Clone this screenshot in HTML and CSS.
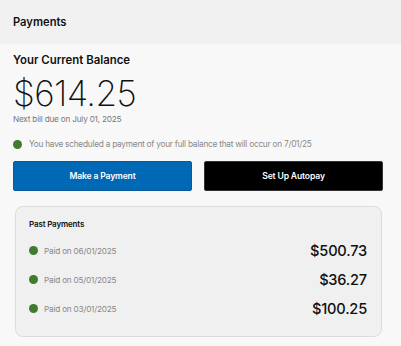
FILE: index.html
```
<!DOCTYPE html>
<html lang="en">
<head>
    <meta charset="UTF-8">
    <meta name="viewport" content="width=device-width, initial-scale=1.0">
    <title>Payments</title>
    <link rel="stylesheet" href="styles.css">
</head>
<body>
    <header class="top-bar">Payments</header>

    <main class="content">
        <h2 class="balance-title">Your Current Balance</h2>
        <div class="balance-amount">$614.25</div>
        <p class="next-bill">Next bill due on July 01, 2025</p>

        <div class="notice">
            <span class="dot"></span>
            <span>You have scheduled a payment of your full balance that will occur on 7/01/25</span>
        </div>

        <div class="button-row">
            <button class="btn btn-blue">Make a Payment</button>
            <button class="btn btn-black">Set Up Autopay</button>
        </div>

        <!-- Past payments card -->
        <section class="past-card">
            <h3 class="past-title">Past Payments</h3>
            <div class="past-row">
                <span class="dot"></span>
                <span class="past-date">Paid on 06/01/2025</span>
                <span class="past-amount">$500.73</span>
            </div>
            <div class="past-row">
                <span class="dot"></span>
                <span class="past-date">Paid on 05/01/2025</span>
                <span class="past-amount">$36.27</span>
            </div>
            <div class="past-row">
                <span class="dot"></span>
                <span class="past-date">Paid on 03/01/2025</span>
                <span class="past-amount">$100.25</span>
            </div>
        </section>
    </main>
</body>
</html>
```

FILE: styles.css
```
body {
    margin: 0;
    background: #f8f8f8;
    font-family: Inter, 'Noto Sans', sans-serif;
    color: #111;
}
.top-bar {
    height: 44px;
    background: #f1f1f1;
    display: flex;
    align-items: center;
    padding: 0 13px;
    font-size: 11.2px;
    font-weight: 600;
}
.content {
    padding: 0 18px 0 13px;
}
.balance-title {
    margin: 8px 0 0;
    font-size: 11.4px;
    font-weight: 600;
    line-height: 16px;
}
.balance-amount {
    margin-top: 5px;
    font-size: 35px;
    font-weight: 200;
    line-height: 40px;
    letter-spacing: -0.6px;
}
.next-bill {
    margin: 1px 0 0;
    font-size: 8.2px;
    letter-spacing: -0.2px;
    color: #777;
    line-height: 10px;
}
.notice {
    display: flex;
    align-items: center;
    gap: 7px;
    margin-top: 14px;
    font-size: 8.3px;
    letter-spacing: -0.25px;
    color: #888;
    line-height: 12px;
}
.dot {
    width: 9px;
    height: 9px;
    border-radius: 50%;
    background: #3f7d2c;
    flex-shrink: 0;
}
.button-row {
    display: flex;
    gap: 12px;
    margin-top: 11px;
}
.btn {
    flex: 1;
    height: 30px;
    border-radius: 2px;
    font-family: inherit;
    font-size: 8.6px;
    letter-spacing: -0.15px;
    font-weight: 600;
    color: #fff;
    cursor: pointer;
}
.btn-blue {
    background: #0068b5;
    border: 1px solid #0a5a9a;
}
.btn-black {
    background: #000;
    border: 1px solid #333;
}
.past-card {
    margin: 15px 1px 0 2px;
    background: #f0f0f0;
    border: 1px solid #dcdcdc;
    border-radius: 8px;
    padding: 12px 14px 12px 13px;
}
.past-title {
    margin: 0 0 7px;
    font-size: 8px;
    letter-spacing: -0.15px;
    font-weight: 600;
    line-height: 10px;
}
.past-row {
    display: flex;
    align-items: center;
    gap: 6px;
    height: 29.2px;
}
.past-date {
    font-size: 8.2px;
    letter-spacing: -0.2px;
    color: #888;
}
.past-amount {
    margin-left: auto;
    font-size: 14.6px;
    letter-spacing: -0.2px;
    font-weight: 500;
}
```
